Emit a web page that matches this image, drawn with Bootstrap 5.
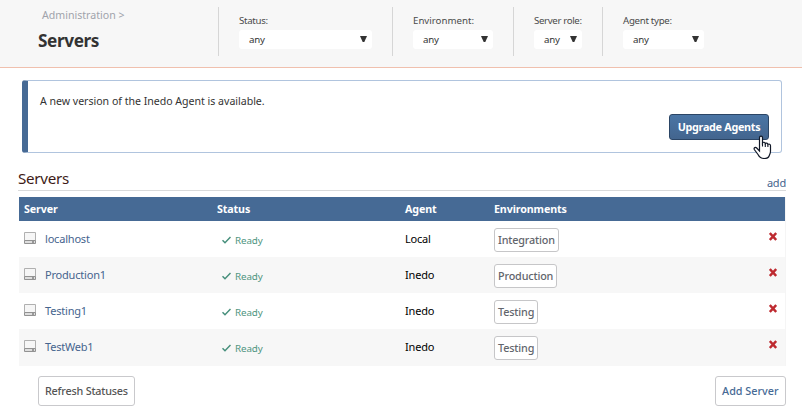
<!DOCTYPE html>
<html lang="en">
<head>
<meta charset="utf-8">
<meta name="viewport" content="width=device-width, initial-scale=1">
<title>Servers</title>
<link href="https://cdn.jsdelivr.net/npm/bootstrap@5.3.0/dist/css/bootstrap.min.css" rel="stylesheet">
<style>
  body { font: 11px/16px "Noto Sans", "Open Sans", sans-serif; color: #000; width: 802px; height: 418px; overflow: hidden; background: #fff; }
  a { color: #46648e; text-decoration: none; }
  .page-head { height: 68px; background: #f7f7f7; border-bottom: 1px solid #f0c0ae; }
  .title-block { width: 218px; padding: 7px 0 0 38px; }
  .crumb { color: #a0a3ab; font-size: 10.6px; padding-left: 4px; }
  .title-block h1 { font-size: 17.2px; letter-spacing: -.4px; line-height: 24px; font-weight: 700; color: #333; margin: 6px 0 0; }
  .filter { border-left: 1px solid #d6d6d6; height: 49px; margin-top: 7px; padding: 6px 20px 0; font-size: 9.7px; line-height: 14px; color: #4a4a4a; }
  .filter label { display: block; white-space: nowrap; margin-top: 1px; }
  .picker { height: 19px; margin-top: 2px; background: #fff; border-radius: 3px; padding: 0 5px 0 10px; color: #333; letter-spacing: -.2px; }
  .picker svg { width: 7px; height: 6px; margin-top: -2px; }
  .w-status { width: 174px; } .w-status label { letter-spacing: -.3px; } .w-status .picker { width: 133px; }
  .w-env { width: 121px; } .w-env .picker { width: 80px; }
  .w-role { width: 89px; } .w-role label { letter-spacing: -.35px; } .w-role .picker { width: 48px; }
  .w-agent label { letter-spacing: -.3px; } .w-agent .picker { width: 81px; }
  .notice { margin: 12px 20px 0 22px; height: 73px; border: 1px solid #b0c4de; border-left: 6px solid #466a95; border-radius: 3px; padding: 12px 12px 12px 12px; color: #333; font-size: 10.6px; letter-spacing: -.02px; }
  .btn { --bs-btn-font-size: 10.8px; --bs-btn-line-height: 16px; --bs-btn-font-weight: 500; --bs-btn-border-radius: 3px; --bs-btn-padding-y: 6px; --bs-btn-padding-x: 6px; white-space: nowrap; letter-spacing: -.2px; }
  .btn-upgrade { width: 100px; height: 26px; padding: 4px 0; font-weight: 700; color: #fff; letter-spacing: -.3px; background: linear-gradient(#4a75a5, #43658e); border: 1px solid #2b4565; }
  .hand { position: absolute; left: 84px; top: 21px; width: 19px; height: 25px; }
  .section-head { margin: 14px 16px 0 18px; height: 24px; border-bottom: 1px solid #d9dadb; }
  .section-head h2 { font-size: 15.2px; letter-spacing: -.3px; line-height: 22px; font-weight: 400; color: #3e1b17; margin: 0 0 1px; }
  .section-head a { letter-spacing: -.2px; margin-bottom: -1px; }
  .grid { width: 767px; margin: 6px 0 0 19px; border-right: 1px solid #f5f5f5; }
  .grid-head, .grid-row { display: grid; grid-template-columns: 193px 188px 89px 1fr 22px; padding-left: 5px; }
  .grid-head { height: 24px; background: #466a95; color: #fff; font-weight: 700; align-items: center; font-size: 10.7px; letter-spacing: -.12px; }
  .grid-row { height: 36px; font-size: 11px; letter-spacing: -.2px; }
  .grid-row:last-child { height: 37px; }
  .grid-row:nth-child(odd) { background: #f7f7f7; }
  .cell { padding-top: 10px; }
  .drive { width: 12px; height: 13px; margin: 1px 9px 0 0; }
  .ready { color: #4f9580; font-size: 9.8px; padding: 12px 0 0 5px; letter-spacing: -.1px; }
  .ready svg { width: 9px; height: 8px; margin: 3px 4px 0 0; }
  .env-tag { display: inline-block; margin-top: 7px; height: 24px; padding: 3px 3px; border: 1px solid #c6c6c8; border-radius: 3px; background: #fff; color: #62656c; font-weight: 500; font-size: 10.8px; letter-spacing: -.15px; }
  .remove { width: 8px; height: 9px; margin: 11px 0 0 6px; }
  .foot { padding: 10px 16px 0 38px; }
  .btn-plain { height: 30px; background: #fff; border-color: #c9c9cc; color: #555; }
  .btn-add { color: #466a95; letter-spacing: 0; --bs-btn-padding-x: 6.500px; }
</style>
<script src="https://cdn.jsdelivr.net/npm/bootstrap@5.3.0/dist/js/bootstrap.bundle.min.js"></script>
</head>
<body>
<svg width="0" height="0" class="position-absolute">
  <symbol id="arrow" viewBox="0 0 7 6"><path d="M0 0h7L4.300 6H2.700z" fill="#333"/></symbol>
  <symbol id="drive" viewBox="0 0 12 13"><path d="M.5.5h11v8H.5z" fill="#f6f6f6" stroke="#b0b0b0"/><path d="M.5 8.500h11v3H.5z" fill="#dedede" stroke="#929292"/><path d="M8 10h2" stroke="#555"/></symbol>
  <symbol id="check" viewBox="0 0 9 8"><path d="M.5 4.200 3 6.700 8.500 1" fill="none" stroke="#468f7b" stroke-width="1.500"/></symbol>
  <symbol id="cross" viewBox="0 0 8 9"><path d="M.8 1 7.200 8M7.200 1 .8 8" stroke="#be2a30" stroke-width="2.500"/></symbol>
</svg>
<header class="page-head d-flex">
  <div class="title-block"><div class="crumb">Administration &gt;</div><h1>Servers</h1></div>
  <div class="filter w-status"><label>Status:</label><div class="picker d-flex align-items-center justify-content-between"><span>any</span><svg><use href="#arrow"/></svg></div></div>
  <div class="filter w-env"><label>Environment:</label><div class="picker d-flex align-items-center justify-content-between"><span>any</span><svg><use href="#arrow"/></svg></div></div>
  <div class="filter w-role"><label>Server role:</label><div class="picker d-flex align-items-center justify-content-between"><span>any</span><svg><use href="#arrow"/></svg></div></div>
  <div class="filter w-agent"><label>Agent type:</label><div class="picker d-flex align-items-center justify-content-between"><span>any</span><svg><use href="#arrow"/></svg></div></div>
</header>
<main>
  <section class="notice d-flex flex-column justify-content-between">
    <div>A new version of the Inedo Agent is available.</div>
    <div class="position-relative align-self-end">
      <button class="btn btn-upgrade d-block">Upgrade Agents</button>
      <svg class="hand" viewBox="0 0 19 25"><path d="M6.500 16V2.800c0-2.200 3-2.200 3 0V8c.8-1.300 2.500-.8 2.800.6.900-1 2.400-.5 2.600.8 1-.8 2.600-.2 2.600 1.300v5.500c0 2-.8 3-1.300 4.500-.6 1.900-2.200 2.800-5.200 2.800-3.500 0-5-2-6-4L1.300 14.500c-.8-1.800 1.200-2.700 2.400-1.500z" fill="#fff" stroke="#111827" stroke-width="1.200"/><path d="M9.500 7.500v4M12.300 8.500v3.500M14.900 9.500V12" stroke="#111827" stroke-width="1.100"/></svg>
    </div>
  </section>
  <div class="section-head d-flex justify-content-between align-items-end"><h2>Servers</h2><a href="#">add</a></div>
  <div class="grid">
    <div class="grid-head"><span>Server</span><span>Status</span><span>Agent</span><span>Environments</span></div>
    <div class="grid-row bg-white"><div class="cell d-flex"><svg class="drive"><use href="#drive"/></svg><a href="#">localhost</a></div><div class="ready d-flex"><svg><use href="#check"/></svg>Ready</div><div class="cell">Local</div><div><span class="env-tag">Integration</span></div><svg class="remove"><use href="#cross"/></svg></div>
    <div class="grid-row"><div class="cell d-flex"><svg class="drive"><use href="#drive"/></svg><a href="#">Production1</a></div><div class="ready d-flex"><svg><use href="#check"/></svg>Ready</div><div class="cell">Inedo</div><div><span class="env-tag">Production</span></div><svg class="remove"><use href="#cross"/></svg></div>
    <div class="grid-row bg-white"><div class="cell d-flex"><svg class="drive"><use href="#drive"/></svg><a href="#">Testing1</a></div><div class="ready d-flex"><svg><use href="#check"/></svg>Ready</div><div class="cell">Inedo</div><div><span class="env-tag">Testing</span></div><svg class="remove"><use href="#cross"/></svg></div>
    <div class="grid-row"><div class="cell d-flex"><svg class="drive"><use href="#drive"/></svg><a href="#">TestWeb1</a></div><div class="ready d-flex"><svg><use href="#check"/></svg>Ready</div><div class="cell">Inedo</div><div><span class="env-tag">Testing</span></div><svg class="remove"><use href="#cross"/></svg></div>
  </div>
  <div class="foot d-flex justify-content-between"><button class="btn btn-plain">Refresh Statuses</button><button class="btn btn-plain btn-add">Add Server</button></div>
</main>
</body>
</html>
